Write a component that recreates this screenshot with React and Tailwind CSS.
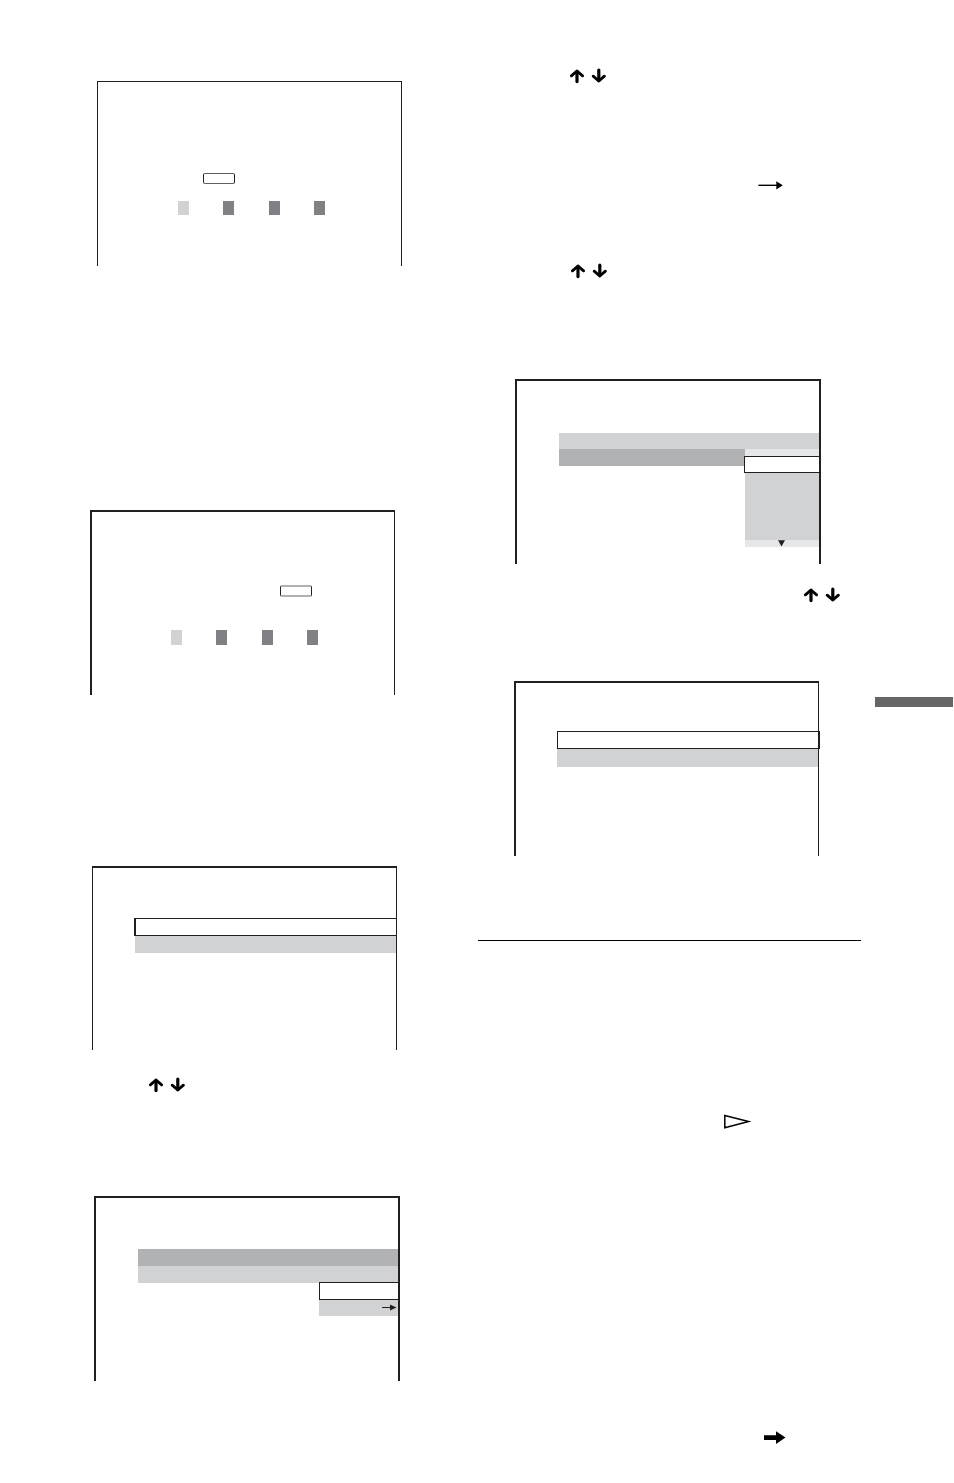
const swatches = ["bg-[#d1d2d4]", "bg-[#808184]", "bg-[#808184]", "bg-[#808184]"];

function UpDownArrows({ className }) {
  return (
    <svg
      className={`block shrink-0 ${className}`}
      width="38"
      height="16"
      viewBox="0 0 38 16"
      fill="none"
      stroke="#000"
      strokeWidth="3.2"
      strokeLinecap="round"
      strokeLinejoin="round"
      aria-hidden="true"
    >
      <path d="M8 13.6V3.4" />
      <path d="M2.4 7.8L8 3L13.6 7.8" strokeWidth="2.9" />
      <path d="M29.8 2V12.6" />
      <path d="M24.2 8.2L29.8 13L35.4 8.2" strokeWidth="2.9" />
    </svg>
  );
}

function ThinArrow({ className }) {
  return (
    <svg className={`block shrink-0 ${className}`} width="28" height="11" viewBox="0 0 28 11" aria-hidden="true">
      <path d="M1.4 5.3H22" stroke="#000" strokeWidth="1.4" />
      <path d="M19.3 1.2L25.8 5.3L19.3 9.4Z" fill="#000" />
    </svg>
  );
}

function BoldArrow({ className }) {
  return (
    <svg className={`block shrink-0 ${className}`} width="24" height="15" viewBox="0 0 24 15" aria-hidden="true">
      <path d="M1 5.2H13V1.2L22.5 7.6L13 14V10H1Z" fill="#000" />
    </svg>
  );
}

function PlayOutline({ className }) {
  return (
    <svg className={`block shrink-0 ${className}`} width="30" height="17" viewBox="0 0 30 17" aria-hidden="true">
      <path d="M1.8 2.4L25.6 8.5L1.8 14.8Z" fill="none" stroke="#000" strokeWidth="1.5" />
    </svg>
  );
}

function Swatches({ className }) {
  return (
    <div className={`flex justify-between ${className}`}>
      {swatches.map((color, i) => (
        <div key={i} className={`w-[11px] ${color}`} />
      ))}
    </div>
  );
}

function Screen({ className, children }) {
  return <section className={`flex flex-col border-[#231f20] ${className}`}>{children}</section>;
}

export default function App() {
  return (
    <main className="flex min-h-screen w-full bg-white">
      <div className="flex w-1/2 flex-col">
        <Screen className="mt-[81px] ml-[97px] mr-[75px] h-[185px] border-x border-t">
          <div className="mt-[91px] ml-[105px] h-[11px] w-8 rounded-xs border border-x-[#231f20] border-y-[#5f5d5e]" />
          <Swatches className="mt-[17px] ml-20 mr-[76px] h-3.5" />
        </Screen>

        <Screen className="mt-[244px] ml-[90px] mr-[82px] h-[185px] border-t-2 border-l-2 border-r">
          <div className="mt-[73px] ml-[188px] h-3 w-8 rounded-xs border-x border-y-2 border-x-[#231f20] border-y-[#b0b0b0]" />
          <Swatches className="mt-[33px] ml-[79px] mr-[76px] h-[15px]" />
        </Screen>

        <Screen className="mt-[171px] ml-[92px] mr-20 h-[184px] border-x border-t-2">
          <div className="mt-[50px] ml-[41px] h-[18px] border-y border-l-2 border-[#231f20]" />
          <div className="ml-[42px] h-[17px] bg-[#d1d2d4]" />
        </Screen>

        <UpDownArrows className="mt-[27px] ml-[148px]" />

        <Screen className="mt-[103px] ml-[94px] mr-[77px] h-[185px] border-x-2 border-t-2">
          <div className="mt-[51px] ml-[42px] h-[17px] bg-[#b1b2b4]" />
          <div className="ml-[42px] h-[17px] bg-[#d1d2d4]" />
          <div className="-mt-px flex w-[79px] flex-col self-end">
            <div className="h-[18px] border-y border-l border-[#231f20] bg-white" />
            <div className="flex h-4 items-center justify-end bg-[#d1d2d4] pr-px">
              <svg width="16" height="8" viewBox="0 0 16 8" aria-hidden="true">
                <path d="M1 3.5H10" stroke="#231f20" />
                <path d="M9 0.5L15.5 3.5L9 6.5Z" fill="#231f20" />
              </svg>
            </div>
          </div>
        </Screen>
      </div>

      <div className="flex flex-1 flex-col pb-[38px]">
        <UpDownArrows className="mt-[68px] ml-[92px]" />
        <ThinArrow className="mt-24 ml-[280px]" />
        <UpDownArrows className="mt-[72px] ml-[93px]" />

        <Screen className="mt-[100px] ml-[38px] mr-10 h-[185px] border-x-2 border-t-2">
          <div className="mt-[52px] ml-[42px] h-4 bg-[#d1d2d4]" />
          <div className="ml-[42px] flex items-start">
            <div className="-mr-px h-[17px] flex-1 bg-[#b1b2b4]" />
            <div className="flex w-[75px] flex-col">
              <div className="ml-px h-[7px] bg-[#e6e7e8]" />
              <div className="h-[17px] border-y border-l border-[#231f20] bg-white" />
              <div className="ml-px h-[67px] bg-[#d1d2d4]" />
              <div className="ml-px flex h-[7px] justify-center bg-[#e6e7e8]">
                <svg width="8" height="7" viewBox="0 0 8 7" aria-hidden="true">
                  <path d="M0 0.3H7L3.5 6.6Z" fill="#231f20" />
                </svg>
              </div>
            </div>
          </div>
        </Screen>

        <UpDownArrows className="mt-[23px] ml-[326px]" />

        <Screen className="mt-[78px] ml-[37px] mr-[42px] h-[175px] border-t-2 border-l-2 border-r">
          <div className="-mr-0.5 mt-12 ml-[41px] h-[18px] border border-[#231f20]" />
          <div className="ml-[41px] h-[18px] bg-[#d1d2d4]" />
        </Screen>

        <hr className="mt-[84px] ml-px border-t border-black" />

        <PlayOutline className="mt-[172px] ml-[246px]" />
        <BoldArrow className="mt-[300px] ml-[286px]" />
      </div>

      <aside className="w-[93px]">
        <div className="mt-[697px] mr-px ml-3.5 h-2.5 bg-[#666]" />
      </aside>
    </main>
  );
}
